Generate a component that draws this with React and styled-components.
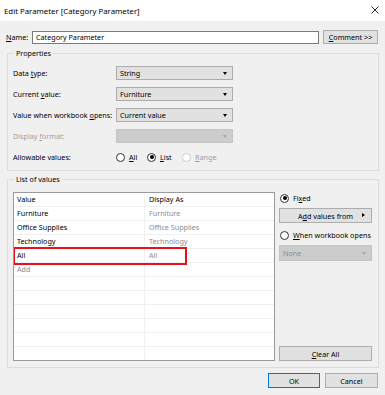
import React from "react";
import { styled, createGlobalStyle } from "styled-components";

const GlobalStyle = createGlobalStyle`
  html, body { margin: 0; padding: 0; }
  body {
    background: #f0f0f0;
    font-family: "Noto Sans", "Open Sans", sans-serif;
    font-size: 7.2px;
    color: #000;
  }
  u { text-decoration-thickness: 1px; text-underline-offset: 1px; }
`;

const rows = [
  { value: "Furniture", display: "Furniture" },
  { value: "Office Supplies", display: "Office Supplies" },
  { value: "Technology", display: "Technology" },
  { value: "All", display: "All" },
  { value: "Add", display: "", add: true },
];

function Radio({ checked, disabled, children }) {
  return (
    <RadioLabel $disabled={disabled}>
      <RadioCircle $checked={checked} $disabled={disabled} />
      <span>{children}</span>
    </RadioLabel>
  );
}

function Combo({ children, disabled, width }) {
  return (
    <ComboBox $disabled={disabled} $w={width}>
      <span>{children}</span>
      <Caret $disabled={disabled} />
    </ComboBox>
  );
}

export default function App() {
  const empty = Array.from({ length: 6 });
  return (
    <Window>
      <GlobalStyle />
      <TitleBar>
        <Title>Edit Parameter [Category Parameter]</Title>
        <svg width="8" height="8" viewBox="0 0 8 8">
          <path d="M0.5 0.5 L7.5 7.5 M7.5 0.5 L0.5 7.5" stroke="#111" strokeWidth="0.9" />
        </svg>
      </TitleBar>
      <Body>
        <NameRow>
          <NameLabel>
            <u>N</u>ame:
          </NameLabel>
          <TextInput>Category Parameter</TextInput>
          <Button $w={55}>
            <u>C</u>omment &gt;&gt;
          </Button>
        </NameRow>

        <Group>
          <Legend>Properties</Legend>
          <PropGrid>
            <FieldLabel>
              Data <u>t</u>ype:
            </FieldLabel>
            <Combo>String</Combo>
            <FieldLabel>
              Current <u>v</u>alue:
            </FieldLabel>
            <Combo>Furniture</Combo>
            <FieldLabel>
              Value when workbook <u>o</u>pens:
            </FieldLabel>
            <Combo>Current value</Combo>
            <FieldLabel $disabled>
              Display <u>f</u>ormat:
            </FieldLabel>
            <Combo disabled />
            <FieldLabel>Allowable values:</FieldLabel>
            <RadioRow>
              <Radio>
                <u>A</u>ll
              </Radio>
              <Radio checked>
                <u>L</u>ist
              </Radio>
              <Radio disabled>
                <u>R</u>ange
              </Radio>
            </RadioRow>
          </PropGrid>
        </Group>

        <ListGroup>
          <Legend>List of values</Legend>
          <ListArea>
            <Table>
              <Row>
                <Cell>Value</Cell>
                <Cell>Display As</Cell>
              </Row>
              {rows.map((r) => (
                <Row key={r.value}>
                  <Cell $muted={r.add}>{r.value}</Cell>
                  <Cell $muted>{r.display}</Cell>
                </Row>
              ))}
              {empty.map((_, i) => (
                <Row key={i}>
                  <Cell />
                  <Cell />
                </Row>
              ))}
              <Highlight />
            </Table>
            <Side>
              <Radio checked>
                Fi<u>x</u>ed
              </Radio>
              <Button $w={93} $h={15}>
                <span>
                  A<u>d</u>d values from
                </span>
                <RightCaret />
              </Button>
              <Radio>
                <u>W</u>hen workbook opens
              </Radio>
              <Combo disabled width={93}>
                None
              </Combo>
              <Spacer />
              <Button $w={93} $h={15}>
                <u>C</u>lear All
              </Button>
            </Side>
          </ListArea>
        </ListGroup>

        <Footer>
          <Button $w={52} $h={15} $default>
            OK
          </Button>
          <Button $w={53} $h={15}>
            Cancel
          </Button>
        </Footer>
      </Body>
    </Window>
  );
}

const Window = styled.div`
  width: 385px;
  height: 395px;
  background: #f0f0f0;
  overflow: hidden;
  display: flex;
  flex-direction: column;
`;

const TitleBar = styled.div`
  height: 21px;
  background: #fff;
  display: flex;
  align-items: center;
  justify-content: space-between;
  padding: 0 6px 0 4px;
  box-sizing: border-box;
  svg {
    margin-top: -1px;
  }
`;

const Title = styled.div`
  font-size: 7.8px;
  margin-top: 1px;
`;

const Body = styled.div`
  padding: 9px 6px 0 7px;
  display: flex;
  flex-direction: column;
`;

const NameRow = styled.div`
  display: flex;
  align-items: center;
  height: 14px;
  margin-left: -1px;
`;

const NameLabel = styled.div`
  width: 26px;
`;

const TextInput = styled.div`
  width: 287px;
  height: 13px;
  box-sizing: border-box;
  border: 1px solid #7a7a7a;
  background: #fff;
  padding-left: 3px;
  line-height: 11px;
  margin-right: 4px;
`;

const Button = styled.div`
  position: relative;
  width: ${({ $w }) => $w}px;
  height: ${({ $h }) => $h || 14}px;
  box-sizing: border-box;
  background: #e1e1e1;
  border: 1px solid ${({ $default }) => ($default ? "#0078d7" : "#adadad")};
  display: flex;
  align-items: center;
  justify-content: center;
  flex-shrink: 0;
`;

const RightCaret = styled.span`
  position: absolute;
  right: 6px;
  top: 4px;
  width: 0;
  height: 0;
  border-top: 2.5px solid transparent;
  border-bottom: 2.5px solid transparent;
  border-left: 3px solid #000;
`;

const Group = styled.fieldset`
  margin: 4px 0 0;
  border: 1px solid #dcdcdc;
  padding: 8px 5px 6px 5px;
  min-width: 0;
`;

const ListGroup = styled(Group)`
  margin-top: 3px;
  padding: 8px 6px 6px 5px;
`;

const Legend = styled.legend`
  padding: 0 2px;
  margin-left: 1px;
  line-height: 10px;
`;

const PropGrid = styled.div`
  display: grid;
  grid-template-columns: 103px 117px;
  grid-auto-rows: 14px;
  row-gap: 7px;
  align-items: center;
`;

const FieldLabel = styled.div`
  color: ${({ $disabled }) => ($disabled ? "#a0a0a0" : "#000")};
  white-space: nowrap;
`;

const ComboBox = styled.div`
  width: ${({ $w }) => ($w ? `${$w}px` : "auto")};
  height: ${({ $w }) => ($w ? 16 : 14)}px;
  box-sizing: border-box;
  background: ${({ $disabled }) => ($disabled ? "#cccccc" : "#e1e1e1")};
  border: 1px solid ${({ $disabled }) => ($disabled ? "#c4c4c4" : "#acacac")};
  display: flex;
  align-items: center;
  justify-content: space-between;
  padding: 0 5px 0 3px;
  color: ${({ $disabled }) => ($disabled ? "#8c8c8c" : "#000")};
`;

const Caret = styled.span`
  width: 0;
  height: 0;
  border-left: 2.5px solid transparent;
  border-right: 2.5px solid transparent;
  border-top: 3px solid ${({ $disabled }) => ($disabled ? "#a8a8a8" : "#000")};
`;

const RadioRow = styled.div`
  display: flex;
  align-items: center;
  & > label:nth-child(1) {
    width: 31px;
  }
  & > label:nth-child(2) {
    width: 35px;
  }
`;

const RadioLabel = styled.label`
  display: flex;
  align-items: center;
  gap: 4px;
  color: ${({ $disabled }) => ($disabled ? "#a0a0a0" : "#000")};
  white-space: nowrap;
`;

const RadioCircle = styled.span`
  flex-shrink: 0;
  width: 9px;
  height: 9px;
  box-sizing: border-box;
  border-radius: 50%;
  border: 1px solid ${({ $disabled }) => ($disabled ? "#cccccc" : "#333")};
  background: #fff;
  display: flex;
  align-items: center;
  justify-content: center;
  &::after {
    content: "";
    width: 4px;
    height: 4px;
    border-radius: 50%;
    background: #000;
    display: ${({ $checked }) => ($checked ? "block" : "none")};
  }
`;

const ListArea = styled.div`
  display: flex;
  gap: 4px;
`;

const Table = styled.div`
  position: relative;
  width: 262px;
  height: 169px;
  box-sizing: border-box;
  border: 1px solid #9a9a9a;
  background: #fff;
  overflow: hidden;
`;

const Row = styled.div`
  display: grid;
  grid-template-columns: 130px 1fr;
  height: 14px;
  box-sizing: border-box;
  border-bottom: 1px solid #f0f0f0;
`;

const Cell = styled.div`
  padding-left: 3px;
  line-height: 13px;
  color: ${({ $muted }) => ($muted ? "#8d8d8d" : "#000")};
  white-space: nowrap;
  & + & {
    border-left: 1px solid #f0f0f0;
    padding-left: 4px;
  }
`;

const Highlight = styled.div`
  position: absolute;
  left: -1px;
  top: 54px;
  width: 174px;
  height: 18px;
  box-sizing: border-box;
  border: 2px solid #e8101a;
`;

const Side = styled.div`
  width: 93px;
  display: flex;
  flex-direction: column;
  padding-top: 1px;
  & > label:first-child {
    margin-left: 1px;
  }
  & > div:nth-child(2) {
    margin-top: 5px;
  }
  & > label:nth-child(3) {
    margin-top: 7px;
    margin-left: 1px;
  }
  & > div:nth-child(4) {
    margin-top: 5px;
  }
`;

const Spacer = styled.div`
  flex: 1;
`;

const Footer = styled.div`
  display: flex;
  justify-content: flex-end;
  gap: 5px;
  margin-top: 5px;
  padding-right: 1px;
`;
